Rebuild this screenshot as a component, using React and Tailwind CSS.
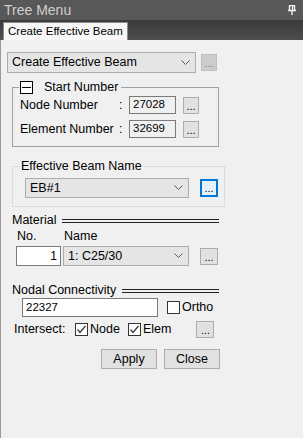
import React from 'react';

const font = { fontFamily: '"Liberation Sans", Arial, sans-serif' };

const Chevron = () => (
  <svg width="9" height="6" viewBox="0 0 9 6" className="mr-[5px]">
    <path d="M0.5 0.5 L4.5 4.5 L8.5 0.5" fill="none" stroke="#5a5a5a" strokeWidth="1" />
  </svg>
);

const Select = ({ value, className = '' }) => (
  <div className={`flex items-center justify-between border border-[#adadad] bg-[#e5e5e5] pl-[4px] text-[12.5px] text-black ${className}`}>
    <span>{value}</span>
    <Chevron />
  </div>
);

const Dots = ({ className = '', disabled, focused }) => {
  let tone = 'border-[#adadad] bg-[#e1e1e1] text-black';
  if (disabled) tone = 'border-[#bfbfbf] bg-[#cccccc] text-[#838383]';
  if (focused) tone = 'border-2 border-[#0078d7] bg-[#e5f1fb] text-black';
  return (
    <div className={`flex items-end justify-center border pb-[1px] text-[11px] leading-none ${tone} ${className}`}>
      ...
    </div>
  );
};

const Check = ({ checked }) => (
  <div className="flex h-[13px] w-[13px] items-center justify-center border border-[#333] bg-white">
    {checked && (
      <svg width="11" height="11" viewBox="0 0 11 11">
        <path d="M1.5 5.5 L4 8.5 L9.5 2" fill="none" stroke="#333" strokeWidth="1.2" />
      </svg>
    )}
  </div>
);

const Btn = ({ children }) => (
  <div className="flex h-[20px] w-[56px] items-center justify-center border border-[#adadad] bg-[#e1e1e1] text-[12.5px]">
    {children}
  </div>
);

// section title followed by a double rule running to the right edge
const Header = ({ label, className = '' }) => (
  <div className={`ml-[5px] flex h-[14px] w-[207px] items-center leading-none ${className}`}>
    <span className="text-[12.5px]">{label}</span>
    <div className="ml-[6px] mt-[2px] flex grow flex-col gap-[2px]">
      <div className="h-[1px] w-full bg-[#222]" />
      <div className="h-[1px] w-full bg-[#222]" />
    </div>
  </div>
);

export default function App() {
  return (
    <div style={font} className="flex h-[438px] w-[303px] flex-col bg-[#f0f0f0] text-black">
      <div className="flex h-[20px] items-center justify-between bg-[#595858] pl-[4px] pr-[7px] text-[14px] text-[#cfcfcf]">
        <span>Tree Menu</span>
        <svg width="8" height="10" viewBox="0 0 8 10">
          <path d="M1.5 0.5 H6.5 V5.5 H1.5 Z M0 5.5 H8 M4 5.5 V10" fill="none" stroke="#f2f2f2" strokeWidth="1.4" />
          <path d="M4.5 1 V5" stroke="#f2f2f2" strokeWidth="1.4" />
        </svg>
      </div>
      <div className="flex h-[20px] items-end bg-gradient-to-b from-[#3a3a3a] to-[#4e4e4e] pl-[3px]">
        <div className="flex h-[18px] items-center border border-b-0 border-[#8a8a8a] bg-[#f7f7f7] px-[4px] text-[11.5px]">
          Create Effective Beam
        </div>
      </div>
      <div className="flex-1 border-l border-[#9a9a9a] pl-[6px]">
        <div className="mt-[12px] flex items-center">
          <Select value="Create Effective Beam" className="h-[21px] w-[189px]" />
          <Dots disabled className="ml-[5px] h-[17px] w-[16px]" />
        </div>

        <fieldset className="ml-[5px] mt-[7px] w-[207px] border border-[#a0a0a0] px-[6px] pb-[8px]">
          <legend className="pl-[1px] pr-[3px]">
            <span className="flex h-[14px] items-center">
              <span className="flex h-[13px] w-[13px] items-center justify-center border border-black bg-white">
                <span className="h-[1px] w-[9px] bg-black" />
              </span>
              <span className="ml-[11px] text-[12.5px]">Start Number</span>
            </span>
          </legend>
          <div className="mt-[2px] flex h-[18px] items-center pl-[1px] text-[12.5px]">
            <span className="w-[99px]">Node Number</span>
            <span className="w-[10px]">:</span>
            <div className="flex h-[18px] w-[47px] items-center border border-[#7a7a7a] bg-[#f0f0f0] pl-[3px] text-[11.5px]">27028</div>
            <Dots className="ml-[7px] h-[17px] w-[16px]" />
          </div>
          <div className="mt-[6px] flex h-[18px] items-center pl-[1px] text-[12.5px]">
            <span className="w-[99px]">Element Number</span>
            <span className="w-[10px]">:</span>
            <div className="flex h-[18px] w-[47px] items-center border border-[#7a7a7a] bg-[#f0f0f0] pl-[3px] text-[11.5px]">32699</div>
            <Dots className="ml-[7px] h-[17px] w-[16px]" />
          </div>
        </fieldset>

        <fieldset className="ml-[5px] mt-[12px] w-[207px] border border-[#dcdcdc] px-[6px] pb-[8px]">
          <legend className="px-[2px]">
            <span className="flex h-[14px] items-center text-[12.5px]">Effective Beam Name</span>
          </legend>
          <div className="mt-[5px] flex items-center pl-[6px]">
            <Select value="EB#1" className="h-[20px] w-[164px]" />
            <Dots focused className="ml-[11px] h-[18px] w-[18px]" />
          </div>
        </fieldset>

        <Header label="Material" className="mt-[6px]" />
        <div className="ml-[10px] mt-[2px] flex h-[15px] items-center text-[12.5px] leading-none">
          <span className="w-[47px]">No.</span>
          <span>Name</span>
        </div>
        <div className="mt-[2px] flex items-center pl-[9px]">
          <div className="flex h-[20px] w-[45px] items-center justify-end border border-[#7a7a7a] bg-white pr-[3px] text-[12px]">1</div>
          <Select value="1: C25/30" className="ml-[2px] h-[20px] w-[126px]" />
          <Dots className="ml-[11px] h-[17px] w-[18px]" />
        </div>

        <Header label="Nodal Connectivity" className="mt-[17px]" />
        <div className="mt-[1px] flex items-center pl-[15px]">
          <div className="flex h-[19px] w-[136px] items-center border border-[#7a7a7a] bg-white pl-[3px] text-[11.5px]">22327</div>
          <div className="ml-[9px]"><Check /></div>
          <span className="ml-[2px] text-[12.5px]">Ortho</span>
        </div>
        <div className="mt-[3px] flex h-[18px] items-center pl-[7px] text-[12.5px]">
          <span className="w-[61px]">Intersect:</span>
          <Check checked />
          <span className="ml-[2px] w-[38px]">Node</span>
          <Check checked />
          <span className="ml-[2px]">Elem</span>
          <Dots className="ml-[25px] h-[17px] w-[18px]" />
        </div>
        <div className="mt-[11px] flex gap-[7px] pl-[94px]">
          <Btn>Apply</Btn>
          <Btn>Close</Btn>
        </div>
      </div>
    </div>
  );
}
